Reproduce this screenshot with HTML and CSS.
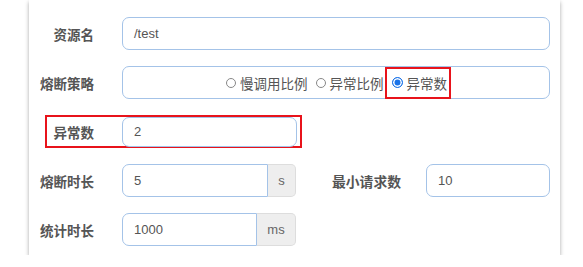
FILE: index.html
```html
<!DOCTYPE html>
<html lang="zh">
<head>
    <meta charset="utf-8" />
    <title>熔断规则</title>
    <link rel="stylesheet" href="styles.css">
</head>
<body>
    <div class="card">
        <div class="row">
            <label class="label">资源名</label>
            <div class="field wide">/test</div>
        </div>

        <div class="row">
            <label class="label">熔断策略</label>
            <div class="field wide radios">
                <span class="radio"><i class="dot"></i>慢调用比例</span>
                <span class="radio"><i class="dot"></i>异常比例</span>
                <span class="radio mark-radio"><i class="dot on"></i>异常数</span>
            </div>
        </div>

        <div class="row">
            <div class="mark-row">
                <label class="label">异常数</label>
                <div class="field short">2</div>
            </div>
        </div>

        <div class="row">
            <label class="label">熔断时长</label>
            <div class="group">
                <div class="field grouped time">5</div>
                <span class="addon">s</span>
            </div>
            <label class="label label-free">最小请求数</label>
            <div class="field min">10</div>
        </div>

        <div class="row">
            <label class="label">统计时长</label>
            <div class="group">
                <div class="field grouped stat">1000</div>
                <span class="addon">ms</span>
            </div>
        </div>
    </div>
</body>
</html>
```

FILE: styles.css
```css
body {
    margin: 0;
    padding: 0;
    background-color: #fff;
    font-family: "Liberation Sans", "Noto Sans CJK SC", sans-serif;
    color: #555;
}

.card {
    margin-left: 29px;
    width: 531px;
    height: 255px;
    box-sizing: border-box;
    padding-top: 17px;
    background-color: #fff;
    box-shadow: 0 2px 4px rgba(0, 0, 0, 0.35);
}

.row {
    display: flex;
    align-items: center;
    height: 33px;
    margin-bottom: 16px;
}

.label {
    width: 65px;
    flex: none;
    text-align: right;
    font-size: 13.5px;
    font-weight: bold;
    color: #555;
}

.field {
    height: 33px;
    box-sizing: border-box;
    margin-left: 28px;
    padding: 0 11px;
    display: flex;
    align-items: center;
    border: 1.5px solid #a4c3e8;
    border-radius: 7px;
    font-size: 13px;
    color: #555;
}

.wide {
    width: 428px;
}

.radios {
    justify-content: center;
    gap: 8px;
    padding-left: 12px;
}

.radio {
    display: flex;
    align-items: center;
    font-size: 13.5px;
    color: #555;
}

.dot {
    width: 10px;
    height: 10px;
    border: 1px solid #888;
    border-radius: 50%;
    margin-right: 4px;
    box-sizing: border-box;
}

.dot.on {
    border: 1.5px solid #1a73e8;
    background-color: #1a73e8;
    box-shadow: inset 0 0 0 1.5px #fff;
    width: 11px;
    height: 11px;
}

.mark-radio {
    position: relative;
}

.mark-radio::after {
    content: "";
    position: absolute;
    left: -7px;
    right: -4px;
    top: -6px;
    bottom: -6px;
    border: 2px solid #e8131b;
}

.mark-row {
    display: flex;
    align-items: center;
    height: 33px;
    box-sizing: border-box;
    margin-left: 16px;
    padding-right: 3px;
    border: 2px solid #e8131b;
}

.mark-row .label {
    width: 47px;
}

.short {
    width: 175px;
    height: 30px;
}

.group {
    display: flex;
    margin-left: 28px;
}

.grouped {
    margin-left: 0;
    border-top-right-radius: 0;
    border-bottom-right-radius: 0;
}

.time {
    width: 146px;
}

.stat {
    width: 135px;
}

.addon {
    height: 33px;
    box-sizing: border-box;
    display: flex;
    align-items: center;
    justify-content: center;
    padding: 0 9px;
    background-color: #eee;
    border: 1px solid #ddd;
    border-left: none;
    border-radius: 0 5px 5px 0;
    font-size: 13px;
    color: #666;
}

.time + .addon {
    width: 28px;
    padding: 0;
}

.stat + .addon {
    width: 39px;
    padding: 0;
}

.label-free {
    width: auto;
    margin-left: 36px;
    font-size: 13.8px;
}

.min {
    width: 124px;
    margin-left: 25px;
}
```
